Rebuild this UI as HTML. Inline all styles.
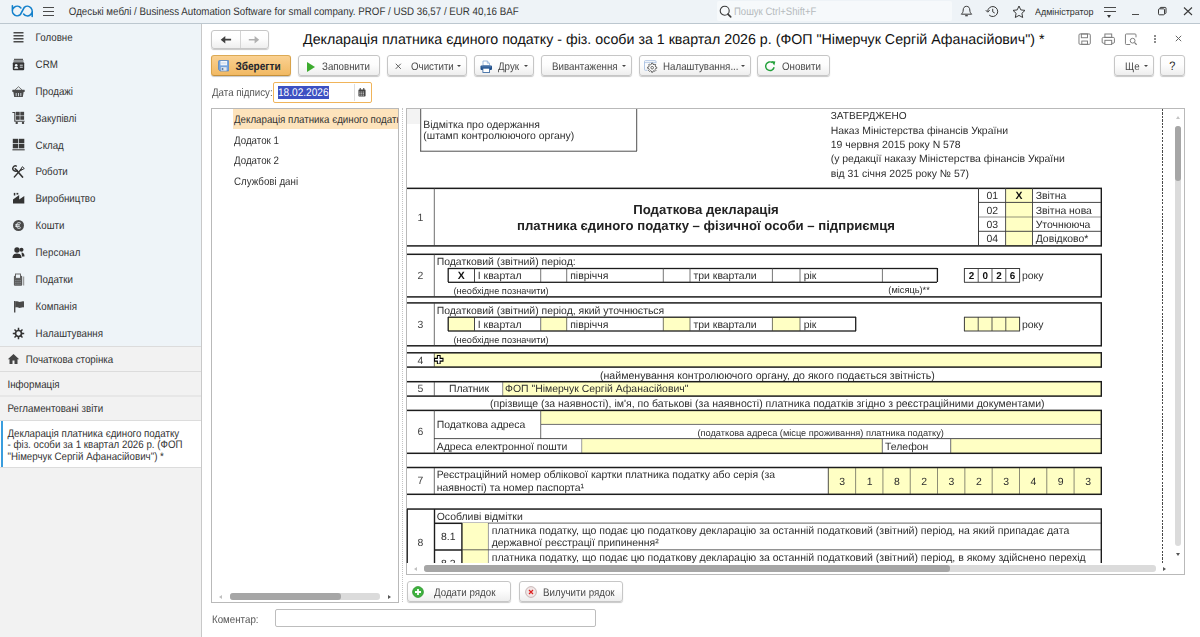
<!DOCTYPE html><html lang="uk"><head><meta charset="utf-8"><title>Декларація платника єдиного податку</title><style>
*{box-sizing:border-box;margin:0;padding:0}
html,body{width:1200px;height:637px;overflow:hidden;background:#fff}
body{font-family:"Liberation Sans",sans-serif;font-size:9.75px;color:#333;position:relative;text-rendering:geometricPrecision}
.a{position:absolute}
.t{position:absolute;white-space:nowrap}
.btn{position:absolute;border:1px solid #c6c6c6;border-radius:3px;background:linear-gradient(#fff 0%,#fdfdfd 45%,#eeeeee 100%);box-shadow:0 1px 1px rgba(0,0,0,.22)}
</style></head><body><div class="a" style="left:0px;top:0px;width:1200px;height:23px;background:#eef3f7;"></div><div class="a" style="left:0px;top:23px;width:1200px;height:1px;background:#bcc7cf"></div><svg class="a" style="left:6px;top:2px" width="30" height="20" viewBox="0 0 30 20"><path d="M14.900 5.900A4.800 4.800 0 1 0 14.300 12.700L18.300 5.300A4.800 4.800 0 1 1 17.600 12.100M6.400 3.700V9M26.200 9v5.500" fill="none" stroke="#1380cb" stroke-width="1.600" stroke-linecap="round"/></svg><div class="a" style="left:43px;top:7px;width:11px;height:1px;background:#4a4a4a;"></div><div class="a" style="left:43px;top:11px;width:11px;height:1px;background:#4a4a4a;"></div><div class="a" style="left:43px;top:15px;width:11px;height:1px;background:#4a4a4a;"></div><div class="t" style="left:68.8px;top:7px;font-size:9.75px;line-height:12px;color:#333;transform:scaleY(1.12);">Одеські меблі / Business Automation Software for small company. PROF / USD 36,57 / EUR 40,16 BAF</div><div class="a" style="left:717px;top:1px;width:235px;height:20px;background:#f6f9fb;border-radius:2px"></div><svg class="a" style="left:719px;top:5px" width="13" height="13" viewBox="0 0 13 13"><circle cx="5.700" cy="5.700" r="4.500" fill="none" stroke="#3a3a3a" stroke-width="1.100"/><path d="M8.900 9.100l2.800 2.800" stroke="#3a3a3a" stroke-width="1.600" stroke-linecap="round"/></svg><div class="t" style="left:734px;top:7px;font-size:9.55px;line-height:12px;color:#b5babd;transform:scaleY(1.14);">Пошук Ctrl+Shift+F</div><svg class="a" style="left:960px;top:5px" width="13" height="13" viewBox="0 0 13 13"><path d="M6.500 1.300c-2.100 0-3.300 1.600-3.300 3.700 0 2.300-1 3.300-1.900 4.200h10.400c-.9-.9-1.900-1.900-1.900-4.200 0-2.100-1.200-3.700-3.300-3.700z" fill="none" stroke="#3a3a3a" stroke-width="1"/><path d="M5.200 10.700h2.600" stroke="#3a3a3a" stroke-width="1.200"/></svg><svg class="a" style="left:985px;top:5px" width="14" height="13" viewBox="0 0 14 13"><path d="M2.700 6.500a5 5 0 1 1 1.500 3.600" fill="none" stroke="#3a3a3a" stroke-width="1"/><path d="M.8 5.200l1.900 2 2-2" fill="none" stroke="#3a3a3a" stroke-width="1"/><path d="M7.700 3.800v3l2 1.200" fill="none" stroke="#3a3a3a" stroke-width="1"/></svg><svg class="a" style="left:1012px;top:5px" width="14" height="13" viewBox="0 0 14 13"><path d="M7 1l1.800 3.900 4.200.5-3.100 2.900.8 4.200L7 10.400l-3.700 2.100.8-4.200L1 5.400l4.200-.5z" fill="none" stroke="#3a3a3a" stroke-width="1" stroke-linejoin="round"/></svg><div class="t" style="left:1035px;top:7px;font-size:8.95px;line-height:11px;color:#333;transform:scaleY(1.05);">Адміністратор</div><div class="a" style="left:1104px;top:7px;width:11.5px;height:1px;background:#4a4a4a;"></div><div class="a" style="left:1104px;top:11px;width:11.5px;height:1px;background:#4a4a4a;"></div><div class="a" style="left:1107px;top:15px;width:0;height:0;border-left:2.500px solid transparent;border-right:2.500px solid transparent;border-top:3px solid #333"></div><div class="a" style="left:1132px;top:14px;width:7px;height:1px;background:#4a4a4a;"></div><svg class="a" style="left:1157px;top:6px" width="10" height="10" viewBox="0 0 10 10"><rect x="1.500" y="2.800" width="6" height="6" rx="1" fill="none" stroke="#3a3a3a" stroke-width="1"/><path d="M3 2.800V2.200a.8.800 0 0 1 .8-.8h4.400a.8.800 0 0 1 .8.800v4.500a.8.800 0 0 1-.8.800H7.600" fill="none" stroke="#3a3a3a" stroke-width="1"/></svg><svg class="a" style="left:1183px;top:6px" width="10" height="10" viewBox="0 0 10 10"><path d="M1 1.500l8 7.500M9 1.500l-8 7.500" stroke="#3a3a3a" stroke-width="1.100" fill="none"/></svg><div class="a" style="left:0px;top:24px;width:201px;height:322px;background:#eef4f8;"></div><div class="a" style="left:0px;top:346px;width:201px;height:291px;background:#f2f2f2;"></div><svg class="a" style="left:12px;top:30.7px" width="13" height="13" viewBox="0 0 13 13"><path d="M1.500 1.700h10M1.500 4.700h10M1.500 7.700h10M1.500 10.700h10" stroke="#4a4a4a" stroke-width="1.500"/></svg><div class="t" style="left:35.6px;top:33px;font-size:9.75px;line-height:12px;color:#333;transform:scaleY(1.12);">Головне</div><svg class="a" style="left:12px;top:57.6px" width="13" height="13" viewBox="0 0 13 13"><path d="M2 1.300h9M1.500 3h10" stroke="#333" stroke-width="1"/><rect x=".8" y="4.200" width="11.400" height="8" rx="1" fill="#333"/><circle cx="4.200" cy="7.200" r="1.300" fill="#eef4f8"/><path d="M2.200 10.700c0-1.500 1-2 2-2s2 .5 2 2z" fill="#eef4f8"/><path d="M7.800 7.200h3M7.800 9.200h3" stroke="#eef4f8" stroke-width=".9"/></svg><div class="t" style="left:35.6px;top:60px;font-size:9.75px;line-height:12px;color:#333;transform:scaleY(1.12);">CRM</div><svg class="a" style="left:12px;top:84.5px" width="13" height="13" viewBox="0 0 13 13"><path d="M3 4.900l3.500-3.200L10 4.900" fill="none" stroke="#6a6a6a" stroke-width=".9"/><rect x=".3" y="4.700" width="12.400" height="2.200" rx=".4" fill="#4a4a4a"/><path d="M1.300 6.800h10.400l-.9 5.300H2.200z" fill="#4a4a4a"/><path d="M4.200 8v3.200M6.500 8v3.200M8.800 8v3.200" stroke="#c9d0d5" stroke-width="1"/></svg><div class="t" style="left:35.6px;top:87px;font-size:9.75px;line-height:12px;color:#333;transform:scaleY(1.12);">Продажі</div><svg class="a" style="left:12px;top:111.4px" width="13" height="13" viewBox="0 0 13 13"><path d="M.4 1.500h2.400v8.800h9.800" fill="none" stroke="#444" stroke-width="1.100"/><rect x="3.900" y=".8" width="3.800" height="3.700" fill="#444"/><rect x="8.300" y=".8" width="3.800" height="3.700" fill="#444"/><rect x="3.900" y="5.100" width="3.800" height="3.700" fill="#444"/><rect x="8.300" y="5.100" width="3.800" height="3.700" fill="#444"/><circle cx="4.700" cy="11.900" r="1.200" fill="#444"/><circle cx="11" cy="11.900" r="1.200" fill="#444"/></svg><div class="t" style="left:35.6px;top:114px;font-size:9.75px;line-height:12px;color:#333;transform:scaleY(1.12);">Закупівлі</div><svg class="a" style="left:12px;top:138.3px" width="13" height="13" viewBox="0 0 13 13"><rect x=".8" y=".8" width="5.400" height="4.400" fill="#3a3a3a"/><rect x="6.900" y=".8" width="5.400" height="4.400" fill="#3a3a3a"/><rect x=".8" y="5.900" width="5.400" height="4.400" fill="#3a3a3a"/><rect x="6.900" y="5.900" width="5.400" height="4.400" fill="#3a3a3a"/><path d="M.4 11.800h12.300" stroke="#3a3a3a" stroke-width="1.100"/></svg><div class="t" style="left:35.6px;top:141px;font-size:9.75px;line-height:12px;color:#333;transform:scaleY(1.12);">Склад</div><svg class="a" style="left:12px;top:165.2px" width="13" height="13" viewBox="0 0 13 13"><path d="M3.200 3.800l7.300 8.200" fill="none" stroke="#333" stroke-width="1.700" stroke-linecap="round"/><path d="M4.800 1.300A2.600 2.600 0 1 0 5.600 5" fill="none" stroke="#333" stroke-width="1.400"/><path d="M2.300 12l6.900-7.700" fill="none" stroke="#333" stroke-width="1.300" stroke-linecap="round"/><path d="M8.700 4.700l1.600-3 2 1.800-3 1.700z" fill="none" stroke="#333" stroke-width="1"/></svg><div class="t" style="left:35.6px;top:167px;font-size:9.75px;line-height:12px;color:#333;transform:scaleY(1.12);">Роботи</div><svg class="a" style="left:12px;top:192.1px" width="13" height="13" viewBox="0 0 13 13"><path d="M1 11.400V7.400l6.200-4.300v4.300l5.100-3.400v7.400z" fill="#333"/><rect x="1.800" y=".9" width="1.500" height="2.600" fill="#333"/><rect x="4.500" y=".9" width="1.800" height="1.700" fill="#333"/></svg><div class="t" style="left:35.6px;top:194px;font-size:9.75px;line-height:12px;color:#333;transform:scaleY(1.12);">Виробництво</div><svg class="a" style="left:12px;top:219px" width="13" height="13" viewBox="0 0 13 13"><circle cx="6.500" cy="6.500" r="5.500" fill="#4a4a4a"/><path d="M8.800 4.300C6.300 2.800 4.300 4.300 4.300 6.500s2 3.700 4.500 2.200M3.300 5.800h4.500M3.300 7.300h4.500" fill="none" stroke="#eef4f8" stroke-width="1"/></svg><div class="t" style="left:35.6px;top:221px;font-size:9.75px;line-height:12px;color:#333;transform:scaleY(1.12);">Кошти</div><svg class="a" style="left:12px;top:245.9px" width="13" height="13" viewBox="0 0 13 13"><circle cx="5" cy="4" r="2.700" fill="#333"/><path d="M.5 12c0-3 1.500-4.500 4.500-4.500S9.500 9 9.500 12z" fill="#333"/><circle cx="9.500" cy="3.800" r="2" fill="#333"/><path d="M9.500 6.500c2 0 3 1.500 3 4H10" fill="#333"/></svg><div class="t" style="left:35.6px;top:248px;font-size:9.75px;line-height:12px;color:#333;transform:scaleY(1.12);">Персонал</div><svg class="a" style="left:12px;top:272.8px" width="13" height="13" viewBox="0 0 13 13"><rect x="1.900" y="2.700" width="8.300" height="10" rx="1" fill="#5a5a5a"/><rect x="3.500" y="1" width="5" height="4.300" fill="#eef4f8" stroke="#5a5a5a" stroke-width=".9"/><path d="M3.200 7.600h5.600M3.200 9.400h5.600M3.200 11.200h5.600" stroke="#8a8f93" stroke-width=".9" stroke-dasharray="1.400 .7"/><path d="M11.700 3.500v9" stroke="#8a8a8a" stroke-width="1"/></svg><div class="t" style="left:35.6px;top:275px;font-size:9.75px;line-height:12px;color:#333;transform:scaleY(1.12);">Податки</div><svg class="a" style="left:12px;top:299.7px" width="13" height="13" viewBox="0 0 13 13"><path d="M2.700 1v11.500" stroke="#4a4a4a" stroke-width="1.400"/><path d="M3.200 1.500c2-1 3.500 1 5.500.3 1.300-.5 2.300-.8 3.300-.3v6c-1-.5-2-.2-3.300.3-2 .7-3.500-1.300-5.500-.3z" fill="#4a4a4a"/></svg><div class="t" style="left:35.6px;top:302px;font-size:9.75px;line-height:12px;color:#333;transform:scaleY(1.12);">Компанія</div><svg class="a" style="left:12px;top:326.6px" width="13" height="13" viewBox="0 0 13 13"><circle cx="6.500" cy="6.500" r="3" fill="none" stroke="#333" stroke-width="1.700"/><path d="M6.500.800V3M6.500 10v2.200M.8 6.500H3M10 6.500h2.200M2.500 2.500L4 4M9 9l1.500 1.500M2.500 10.500L4 9M9 4l1.500-1.500" stroke="#333" stroke-width="1.500"/></svg><div class="t" style="left:35.6px;top:329px;font-size:9.75px;line-height:12px;color:#333;transform:scaleY(1.12);">Налаштування</div><div class="a" style="left:0px;top:420px;width:201px;height:47px;background:#fff;"></div><div class="a" style="left:0px;top:346px;width:201px;height:1px;background:#dcdcdc"></div><div class="a" style="left:0px;top:371px;width:201px;height:1px;background:#dcdcdc"></div><div class="a" style="left:0px;top:395px;width:201px;height:1px;background:rgba(220,220,220,0.50)"></div><div class="a" style="left:0px;top:396px;width:201px;height:1px;background:rgba(220,220,220,0.50)"></div><div class="a" style="left:0px;top:420px;width:201px;height:1px;background:#dcdcdc"></div><div class="a" style="left:0px;top:467px;width:201px;height:1px;background:#dcdcdc"></div><div class="a" style="left:1px;top:421px;width:2px;height:45.5px;background:#3a9ddd;"></div><svg class="a" style="left:7px;top:353px" width="13" height="12" viewBox="0 0 13 12"><path d="M6.500 1L.8 6.300h1.700V11h3V7.500h2V11h3V6.300h1.700z" fill="#454545"/></svg><div class="t" style="left:25.7px;top:355px;font-size:9.75px;line-height:12px;color:#333;transform:scaleY(1.12);">Початкова сторінка</div><div class="t" style="left:7.5px;top:380px;font-size:9.75px;line-height:12px;color:#333;transform:scaleY(1.12);">Інформація</div><div class="t" style="left:7.5px;top:404px;font-size:9.75px;line-height:12px;color:#333;transform:scaleY(1.12);">Регламентовані звіти</div><div class="t" style="left:7.5px;top:429px;font-size:9.75px;line-height:12px;color:#333;transform:scaleY(1.12);">Декларація платника єдиного податку</div><div class="t" style="left:7.5px;top:440px;font-size:9.75px;line-height:12px;color:#333;transform:scaleY(1.12);">- фіз. особи за 1 квартал 2026 р. (ФОП</div><div class="t" style="left:7.5px;top:452px;font-size:9.75px;line-height:12px;color:#333;transform:scaleY(1.12);">"Німерчук Сергій Афанасійович") *</div><div class="a" style="left:201px;top:24px;width:1px;height:613px;background:#c8c8c8"></div><div class="btn" style="left:211px;top:30px;width:57.500px;height:18.500px"></div><div class="a" style="left:240px;top:31px;width:1px;height:16.5px;background:#d4d4d4;"></div><svg class="a" style="left:220px;top:35px" width="12" height="10" viewBox="0 0 12 10"><path d="M.7 4.700L5.300 1v2.800h5.800v1.800H5.300v2.800z" fill="#414141"/></svg><svg class="a" style="left:248px;top:35px" width="12" height="10" viewBox="0 0 12 10"><path d="M11.200 4.700L6.600 1v2.900H.8v1.600h5.800v2.900z" fill="#b0b0b0"/></svg><div class="t" style="left:303px;top:31px;font-size:14.23px;line-height:18px;color:#111;">Декларація платника єдиного податку - фіз. особи за 1 квартал 2026 р. (ФОП "Німерчук Сергій Афанасійович") *</div><svg class="a" style="left:1078.300px;top:32.800px" width="13.300" height="12.300" viewBox="0 0 14 13"><rect x="1" y="1" width="12" height="11" rx="1.200" fill="none" stroke="#7a7a7a" stroke-width="1"/><rect x="3.500" y="1" width="6.500" height="4" fill="none" stroke="#7a7a7a" stroke-width="1"/><rect x="4" y="8.500" width="6" height="3.500" fill="none" stroke="#7a7a7a" stroke-width="1"/></svg><svg class="a" style="left:1101.200px;top:32.600px" width="14.600" height="12.700" viewBox="0 0 15 13"><rect x="4" y="1" width="7" height="3.500" fill="none" stroke="#7a7a7a" stroke-width="1"/><rect x="1.200" y="4.500" width="12.600" height="6" rx="1.200" fill="none" stroke="#7a7a7a" stroke-width="1"/><rect x="4" y="7.500" width="7" height="4.500" fill="#fff" stroke="#7a7a7a" stroke-width="1"/></svg><svg class="a" style="left:1124.300px;top:32.500px" width="14.400" height="12.500" viewBox="0 0 15 13"><path d="M12.500 4.500V2a1 1 0 0 0-1-1h-9a1 1 0 0 0-1 1v9a1 1 0 0 0 1 1h4" fill="none" stroke="#7a7a7a" stroke-width="1"/><circle cx="9" cy="8" r="2.500" fill="none" stroke="#7a7a7a" stroke-width="1"/><path d="M11 10l2.200 2.200" stroke="#7a7a7a" stroke-width="1.300"/></svg><div class="a" style="left:1154px;top:34.5px;width:2px;height:2px;background:#666;border-radius:1px"></div><div class="a" style="left:1154px;top:37.5px;width:2px;height:2px;background:#666;border-radius:1px"></div><div class="a" style="left:1154px;top:40.5px;width:2px;height:2px;background:#666;border-radius:1px"></div><svg class="a" style="left:1175px;top:35px" width="7" height="7" viewBox="0 0 7 7"><path d="M.8.800l5.400 5.400M6.200.800L.8 6.200" stroke="#666" stroke-width="1"/></svg><div class="btn" style="left:211px;top:55px;width:80px;height:21px;background:linear-gradient(#fad192,#f1b963);border-color:#dcaa55 #d9a34a #c4903a"></div><svg class="a" style="left:217.500px;top:60px" width="11.500" height="11.500" viewBox="0 0 14 14"><path d="M.7 1.700a1 1 0 0 1 1-1h10.600a1 1 0 0 1 1 1v10.600a1 1 0 0 1-1 1H2.500L.7 11.500z" fill="#76a5de" stroke="#5084c4" stroke-width="1"/><rect x="3" y="1.200" width="8" height="5.300" fill="#f4f7fc"/><rect x="3.800" y="2.500" width="6.400" height="2.600" fill="#dbe4ef"/><rect x="3.500" y="8.800" width="7" height="4.200" fill="#e4e9f0"/><rect x="4.500" y="9.700" width="2" height="2.600" fill="#5f7fa6"/></svg><div class="t" style="left:235.4px;top:61px;font-size:10.1px;line-height:13px;color:#22252e;font-weight:bold;transform:scaleY(1.14);">Зберегти</div><div class="btn" style="left:298px;top:55px;width:81.5px;height:21px;"></div><div class="a" style="left:307px;top:61.500px;width:0;height:0;border-top:5px solid transparent;border-bottom:5px solid transparent;border-left:8.500px solid #3cab2e"></div><div class="t" style="left:322px;top:62px;font-size:9.75px;line-height:12px;color:#484848;transform:scaleY(1.12);will-change:transform;">Заповнити</div><div class="btn" style="left:387px;top:55px;width:79.5px;height:21px;"></div><svg class="a" style="left:395.300px;top:63px" width="6.600" height="6.600" viewBox="0 0 7 7"><path d="M.8.800l5.400 5.400M6.200.800L.8 6.200" stroke="#555" stroke-width="1"/></svg><div class="t" style="left:410.5px;top:62px;font-size:9.75px;line-height:12px;color:#484848;transform:scaleY(1.12);will-change:transform;">Очистити</div><div class="a" style="left:456.5px;top:65px;width:0;height:0;border-left:2px solid transparent;border-right:2px solid transparent;border-top:2.500px solid #444"></div><div class="btn" style="left:474px;top:55px;width:60px;height:21px;"></div><svg class="a" style="left:479.500px;top:59.500px" width="12.500" height="13" viewBox="0 0 12.500 13"><path d="M3 5.700V1h4.300l2.200 2.200v2.500z" fill="#fff" stroke="#86a9d6" stroke-width=".8"/><path d="M7.300 1v2.200h2.200" fill="none" stroke="#86a9d6" stroke-width=".7"/><rect x=".5" y="5.500" width="11.500" height="4.600" rx="1.100" fill="#1f4f8a"/><path d="M1.500 6.900h9.500" stroke="#6a92c6" stroke-width=".8"/><rect x="2.900" y="8.200" width="6.700" height="4.300" fill="#fff" stroke="#2a5c99" stroke-width=".8"/></svg><div class="t" style="left:497.5px;top:62px;font-size:9.75px;line-height:12px;color:#484848;transform:scaleY(1.12);will-change:transform;">Друк</div><div class="a" style="left:524px;top:65px;width:0;height:0;border-left:2px solid transparent;border-right:2px solid transparent;border-top:2.500px solid #444"></div><div class="btn" style="left:540.5px;top:55px;width:91.5px;height:21px;"></div><div class="t" style="left:551.5px;top:62px;font-size:9.75px;line-height:12px;color:#484848;transform:scaleY(1.12);will-change:transform;">Вивантаження</div><div class="a" style="left:622px;top:65px;width:0;height:0;border-left:2px solid transparent;border-right:2px solid transparent;border-top:2.500px solid #444"></div><div class="btn" style="left:639px;top:55px;width:112px;height:21px;"></div><svg class="a" style="left:644px;top:59.700px" width="14" height="13" viewBox="0 0 14 13"><path d="M3.500 10.300H1.300a.8.800 0 0 1-.8-.8V1.500a.8.800 0 0 1 .8-.8h9.900a.8.800 0 0 1 .8.800v1.700" fill="none" stroke="#a9c1e2" stroke-width=".9"/><path d="M.5 2.600h11.500" stroke="#a9c1e2" stroke-width=".8"/><path d="M11.62 6.94L12.76 7.09L12.76 8.31L11.62 8.46L11.16 9.58L11.86 10.49L10.99 11.36L10.08 10.66L8.96 11.12L8.81 12.26L7.59 12.26L7.44 11.12L6.32 10.66L5.41 11.36L4.54 10.49L5.24 9.58L4.78 8.46L3.64 8.31L3.64 7.09L4.78 6.94L5.24 5.82L4.54 4.91L5.41 4.04L6.32 4.74L7.44 4.28L7.59 3.14L8.81 3.14L8.96 4.28L10.08 4.74L10.99 4.04L11.86 4.91L11.16 5.82z" fill="#fff" stroke="#555" stroke-width=".9" stroke-linejoin="round"/><circle cx="8.200" cy="7.700" r="1.300" fill="none" stroke="#555" stroke-width=".9"/></svg><div class="t" style="left:662.5px;top:62px;font-size:9.75px;line-height:12px;color:#484848;transform:scaleY(1.12);will-change:transform;">Налаштування...</div><div class="a" style="left:741px;top:65px;width:0;height:0;border-left:2px solid transparent;border-right:2px solid transparent;border-top:2.500px solid #444"></div><div class="btn" style="left:757px;top:55px;width:72.5px;height:21px;"></div><svg class="a" style="left:762.500px;top:59px" width="14" height="14" viewBox="0 0 14 14"><path d="M11.150 8.300A4.300 4.300 0 1 1 9.470 3.680" fill="none" stroke="#22a03a" stroke-width="1.400"/><path d="M8.200 2.100l4.100.3-1 4z" fill="#22a03a"/></svg><div class="t" style="left:781.5px;top:62px;font-size:9.75px;line-height:12px;color:#484848;transform:scaleY(1.12);will-change:transform;">Оновити</div><div class="btn" style="left:1114px;top:55px;width:39.5px;height:21px;"></div><div class="t" style="left:1124.5px;top:62px;font-size:9.75px;line-height:12px;color:#484848;transform:scaleY(1.12);will-change:transform;">Ще</div><div class="a" style="left:1144px;top:65px;width:0;height:0;border-left:2px solid transparent;border-right:2px solid transparent;border-top:2.500px solid #444"></div><div class="btn" style="left:1160px;top:55px;width:24.5px;height:21px;"></div><div class="t" style="left:1172.3px;top:60px;font-size:11px;line-height:14px;color:#222;transform:translateX(-50%) scaleY(1.12);">?</div><div class="t" style="left:211.5px;top:88px;font-size:9.75px;line-height:12px;color:#555;transform:scaleY(1.12);will-change:transform;">Дата підпису:</div><div class="a" style="left:273px;top:82px;width:99px;height:20.500px;border:1px solid #f0b45a;border-radius:2px;background:#fff"></div><div class="a" style="left:277.5px;top:85.5px;width:51px;height:13px;background:#3c50c2;"></div><div class="t" style="left:278px;top:87px;font-size:10.1px;line-height:13px;color:#fff;transform:scaleY(1.1);">18.02.2026</div><div class="a" style="left:353.5px;top:84px;width:1px;height:16.5px;background:#ddd;"></div><svg class="a" style="left:358.300px;top:87.800px" width="8" height="9" viewBox="0 0 9 10"><rect x=".5" y="1.500" width="8" height="8" rx=".8" fill="#444"/><path d="M2.500 0v2.500M6.500 0v2.500" stroke="#444" stroke-width="1.200"/><path d="M1.500 4.500h6M1.500 6.300h6M1.500 8h6" stroke="#fff" stroke-width=".8" stroke-dasharray="1.300 .7"/></svg><div class="a" style="left:211px;top:108px;width:187.500px;height:494.600px;border:1px solid #b9b9b9;background:#fff"></div><div class="a" style="left:232.5px;top:109px;width:165px;height:20px;background:#fde3bc;"></div><div class="a" style="left:0;top:100px;width:397.500px;height:40px;overflow:hidden"><div class="t" style="left:234px;top:15px;font-size:9.75px;line-height:12px;color:#333;transform:scaleY(1.12);">Декларація платника єдиного податку - фіз. особи</div></div><div class="t" style="left:234px;top:136px;font-size:9.75px;line-height:12px;color:#333;transform:scaleY(1.12);">Додаток 1</div><div class="t" style="left:234px;top:156px;font-size:9.75px;line-height:12px;color:#333;transform:scaleY(1.12);">Додаток 2</div><div class="t" style="left:234px;top:177px;font-size:9.75px;line-height:12px;color:#333;transform:scaleY(1.12);">Службові дані</div><div class="a" style="left:229.5px;top:593px;width:150.5px;height:6.5px;background:#dbdbdb;border-radius:3px"></div><div class="a" style="left:229.5px;top:593px;width:111px;height:6.5px;background:#a6a6a6;border-radius:3px"></div><div class="a" style="left:219px;top:594.500px;width:0;height:0;border-top:2px solid transparent;border-bottom:2px solid transparent;border-right:3px solid #c0c0c0"></div><div class="a" style="left:388px;top:594.500px;width:0;height:0;border-top:2px solid transparent;border-bottom:2px solid transparent;border-left:3px solid #555"></div><div class="a" style="left:402px;top:108px;width:0;height:494px;border-left:1px dotted #c4c4c4"></div><div class="a" style="left:406px;top:108px;width:778.500px;height:466.500px;border:1px solid #b9b9b9;background:#fff"></div><div class="a" style="left:0;top:0;width:1174px;height:563px;overflow:hidden"><div class="a" style="left:407px;top:109px;width:13px;height:15px;background:#f3f3f3;"></div><div class="a" style="left:420px;top:109px;width:1px;height:42px;background:rgba(60,60,60,0.72)"></div><div class="a" style="left:421px;top:109px;width:1px;height:42px;background:rgba(60,60,60,0.18)"></div><div class="a" style="left:636px;top:109px;width:1px;height:42px;background:rgba(60,60,60,0.72)"></div><div class="a" style="left:637px;top:109px;width:1px;height:42px;background:rgba(60,60,60,0.18)"></div><div class="a" style="left:420px;top:150px;width:217px;height:1px;background:rgba(60,60,60,0.27)"></div><div class="a" style="left:420px;top:151px;width:217px;height:1px;background:rgba(60,60,60,0.63)"></div><div class="t" style="left:423.3px;top:119px;font-size:10.45px;line-height:13px;color:#2e2e2e;">Відмітка про одержання</div><div class="t" style="left:423.3px;top:130px;font-size:10.45px;line-height:13px;color:#2e2e2e;">(штамп контролюючого органу)</div><div class="t" style="left:830.7px;top:110px;font-size:10.15px;line-height:13px;color:#2e2e2e;">ЗАТВЕРДЖЕНО</div><div class="t" style="left:830.7px;top:125px;font-size:10.45px;line-height:13px;color:#2e2e2e;">Наказ Міністерства фінансів України</div><div class="t" style="left:830.7px;top:139px;font-size:10.45px;line-height:13px;color:#2e2e2e;">19 червня 2015 року N 578</div><div class="t" style="left:830.7px;top:153px;font-size:10.45px;line-height:13px;color:#2e2e2e;">(у редакції наказу Міністерства фінансів України</div><div class="t" style="left:830.7px;top:168px;font-size:10.45px;line-height:13px;color:#2e2e2e;">від 31 січня 2025 року № 57)</div><div class="a" style="left:1005.6px;top:188.35px;width:26.9px;height:57.55px;background:#ffffc4;"></div><div class="a" style="left:407px;top:187px;width:695px;height:1px;background:rgba(28,28,28,0.40)"></div><div class="a" style="left:407px;top:188px;width:695px;height:1px;background:#1c1c1c"></div><div class="a" style="left:407px;top:189px;width:695px;height:1px;background:rgba(28,28,28,0.10)"></div><div class="a" style="left:407px;top:245px;width:695px;height:1px;background:rgba(28,28,28,0.85)"></div><div class="a" style="left:407px;top:246px;width:695px;height:1px;background:rgba(28,28,28,0.65)"></div><div class="a" style="left:1100px;top:188px;width:1px;height:58px;background:rgba(28,28,28,0.40)"></div><div class="a" style="left:1101px;top:188px;width:1px;height:58px;background:#1c1c1c"></div><div class="a" style="left:433px;top:188px;width:1px;height:58px;background:rgba(60,60,60,0.15)"></div><div class="a" style="left:434px;top:188px;width:1px;height:58px;background:rgba(60,60,60,0.60)"></div><div class="t" style="left:420.5px;top:212px;font-size:10.45px;line-height:13px;color:#444;transform:translateX(-50%);">1</div><div class="t" style="left:706px;top:202px;font-size:13.15px;line-height:16px;color:#222;font-weight:bold;transform:translateX(-50%);">Податкова декларація</div><div class="t" style="left:706px;top:218px;font-size:13.15px;line-height:16px;color:#222;font-weight:bold;transform:translateX(-50%);">платника єдиного податку – фізичної особи – підприємця</div><div class="a" style="left:978px;top:188px;width:1px;height:58px;background:#3c3c3c"></div><div class="a" style="left:1005px;top:188px;width:1px;height:58px;background:rgba(60,60,60,0.81)"></div><div class="a" style="left:1006px;top:188px;width:1px;height:58px;background:rgba(60,60,60,0.09)"></div><div class="a" style="left:1032px;top:188px;width:1px;height:58px;background:rgba(60,60,60,0.90)"></div><div class="a" style="left:978px;top:201px;width:123px;height:1px;background:rgba(60,60,60,0.09)"></div><div class="a" style="left:978px;top:202px;width:123px;height:1px;background:rgba(60,60,60,0.86)"></div><div class="a" style="left:978px;top:216px;width:123px;height:1px;background:rgba(60,60,60,0.28)"></div><div class="a" style="left:978px;top:217px;width:123px;height:1px;background:rgba(60,60,60,0.28)"></div><div class="a" style="left:978px;top:230px;width:123px;height:1px;background:rgba(60,60,60,0.19)"></div><div class="a" style="left:978px;top:231px;width:123px;height:1px;background:rgba(60,60,60,0.76)"></div><div class="t" style="left:986.4px;top:190px;font-size:10.45px;line-height:13px;color:#2e2e2e;">01</div><div class="t" style="left:1035.7px;top:190px;font-size:10.45px;line-height:13px;color:#2e2e2e;">Звітна</div><div class="t" style="left:986.4px;top:205px;font-size:10.45px;line-height:13px;color:#2e2e2e;">02</div><div class="t" style="left:1035.7px;top:205px;font-size:10.45px;line-height:13px;color:#2e2e2e;">Звітна нова</div><div class="t" style="left:986.4px;top:219px;font-size:10.45px;line-height:13px;color:#2e2e2e;">03</div><div class="t" style="left:1035.7px;top:219px;font-size:10.45px;line-height:13px;color:#2e2e2e;">Уточнююча</div><div class="t" style="left:986.4px;top:233px;font-size:10.45px;line-height:13px;color:#2e2e2e;">04</div><div class="t" style="left:1035.7px;top:233px;font-size:10.45px;line-height:13px;color:#2e2e2e;">Довідково*</div><div class="t" style="left:1019px;top:190px;font-size:10.45px;line-height:13px;color:#111;font-weight:bold;transform:translateX(-50%);">X</div><div class="a" style="left:407px;top:253px;width:695px;height:1px;background:rgba(28,28,28,0.45)"></div><div class="a" style="left:407px;top:254px;width:695px;height:1px;background:#1c1c1c"></div><div class="a" style="left:407px;top:255px;width:695px;height:1px;background:rgba(28,28,28,0.05)"></div><div class="a" style="left:407px;top:296px;width:695px;height:1px;background:rgba(28,28,28,0.85)"></div><div class="a" style="left:407px;top:297px;width:695px;height:1px;background:rgba(28,28,28,0.65)"></div><div class="a" style="left:1100px;top:254px;width:1px;height:43px;background:rgba(28,28,28,0.40)"></div><div class="a" style="left:1101px;top:254px;width:1px;height:43px;background:#1c1c1c"></div><div class="a" style="left:433px;top:254px;width:1px;height:43px;background:rgba(60,60,60,0.15)"></div><div class="a" style="left:434px;top:254px;width:1px;height:43px;background:rgba(60,60,60,0.60)"></div><div class="t" style="left:420.5px;top:270px;font-size:10.45px;line-height:13px;color:#444;transform:translateX(-50%);">2</div><div class="t" style="left:436.7px;top:256px;font-size:10.45px;line-height:13px;color:#2e2e2e;">Податковий (звітний) період:</div><div class="a" style="left:448px;top:267px;width:489px;height:1px;background:rgba(28,28,28,0.15)"></div><div class="a" style="left:448px;top:268px;width:489px;height:1px;background:#1c1c1c"></div><div class="a" style="left:448px;top:269px;width:489px;height:1px;background:rgba(28,28,28,0.15)"></div><div class="a" style="left:448px;top:281px;width:489px;height:1px;background:rgba(28,28,28,0.35)"></div><div class="a" style="left:448px;top:282px;width:489px;height:1px;background:rgba(28,28,28,0.95)"></div><div class="a" style="left:447px;top:268px;width:1px;height:14px;background:rgba(28,28,28,0.45)"></div><div class="a" style="left:448px;top:268px;width:1px;height:14px;background:rgba(28,28,28,0.85)"></div><div class="a" style="left:936px;top:268px;width:1px;height:14px;background:rgba(28,28,28,0.25)"></div><div class="a" style="left:937px;top:268px;width:1px;height:14px;background:#1c1c1c"></div><div class="a" style="left:938px;top:268px;width:1px;height:14px;background:rgba(28,28,28,0.05)"></div><div class="a" style="left:474px;top:268px;width:1px;height:14px;background:rgba(60,60,60,0.95)"></div><div class="a" style="left:540px;top:268px;width:1px;height:14px;background:rgba(60,60,60,0.56)"></div><div class="a" style="left:541px;top:268px;width:1px;height:14px;background:rgba(60,60,60,0.14)"></div><div class="a" style="left:566px;top:268px;width:1px;height:14px;background:rgba(60,60,60,0.56)"></div><div class="a" style="left:567px;top:268px;width:1px;height:14px;background:rgba(60,60,60,0.14)"></div><div class="a" style="left:662px;top:268px;width:1px;height:14px;background:rgba(60,60,60,0.14)"></div><div class="a" style="left:663px;top:268px;width:1px;height:14px;background:rgba(60,60,60,0.56)"></div><div class="a" style="left:689px;top:268px;width:1px;height:14px;background:rgba(60,60,60,0.35)"></div><div class="a" style="left:690px;top:268px;width:1px;height:14px;background:rgba(60,60,60,0.35)"></div><div class="a" style="left:771px;top:268px;width:1px;height:14px;background:rgba(60,60,60,0.07)"></div><div class="a" style="left:772px;top:268px;width:1px;height:14px;background:rgba(60,60,60,0.63)"></div><div class="a" style="left:799px;top:268px;width:1px;height:14px;background:rgba(60,60,60,0.35)"></div><div class="a" style="left:800px;top:268px;width:1px;height:14px;background:rgba(60,60,60,0.35)"></div><div class="a" style="left:881px;top:268px;width:1px;height:14px;background:rgba(60,60,60,0.07)"></div><div class="a" style="left:882px;top:268px;width:1px;height:14px;background:rgba(60,60,60,0.63)"></div><div class="t" style="left:461.2px;top:270px;font-size:10.45px;line-height:13px;color:#111;font-weight:bold;transform:translateX(-50%);">X</div><div class="t" style="left:477.8px;top:270px;font-size:10.45px;line-height:13px;color:#2e2e2e;">І квартал</div><div class="t" style="left:570.2px;top:270px;font-size:10.45px;line-height:13px;color:#2e2e2e;">півріччя</div><div class="t" style="left:693.5px;top:270px;font-size:10.45px;line-height:13px;color:#2e2e2e;">три квартали</div><div class="t" style="left:803.7px;top:270px;font-size:10.45px;line-height:13px;color:#2e2e2e;">рік</div><div class="t" style="left:453.5px;top:285px;font-size:9.25px;line-height:12px;color:#2e2e2e;">(необхідне позначити)</div><div class="t" style="left:888.3px;top:284px;font-size:9.25px;line-height:12px;color:#2e2e2e;">(місяць)**</div><div class="a" style="left:964px;top:268px;width:56px;height:1px;background:#3c3c3c"></div><div class="a" style="left:964px;top:281px;width:56px;height:1px;background:rgba(60,60,60,0.20)"></div><div class="a" style="left:964px;top:282px;width:56px;height:1px;background:rgba(60,60,60,0.80)"></div><div class="a" style="left:963px;top:268px;width:1px;height:14px;background:rgba(60,60,60,0.10)"></div><div class="a" style="left:964px;top:268px;width:1px;height:14px;background:rgba(60,60,60,0.90)"></div><div class="a" style="left:977px;top:268px;width:1px;height:14px;background:rgba(60,60,60,0.26)"></div><div class="a" style="left:978px;top:268px;width:1px;height:14px;background:rgba(60,60,60,0.59)"></div><div class="a" style="left:991px;top:268px;width:1px;height:14px;background:rgba(60,60,60,0.42)"></div><div class="a" style="left:992px;top:268px;width:1px;height:14px;background:rgba(60,60,60,0.42)"></div><div class="a" style="left:1005px;top:268px;width:1px;height:14px;background:rgba(60,60,60,0.60)"></div><div class="a" style="left:1006px;top:268px;width:1px;height:14px;background:rgba(60,60,60,0.25)"></div><div class="a" style="left:1019px;top:268px;width:1px;height:14px;background:rgba(60,60,60,0.90)"></div><div class="a" style="left:1020px;top:268px;width:1px;height:14px;background:rgba(60,60,60,0.10)"></div><div class="t" style="left:971.6px;top:271px;font-size:9.9px;line-height:12px;color:#111;font-weight:bold;transform:translateX(-50%);">2</div><div class="t" style="left:985.25px;top:271px;font-size:9.9px;line-height:12px;color:#111;font-weight:bold;transform:translateX(-50%);">0</div><div class="t" style="left:998.9px;top:271px;font-size:9.9px;line-height:12px;color:#111;font-weight:bold;transform:translateX(-50%);">2</div><div class="t" style="left:1012.55px;top:271px;font-size:9.9px;line-height:12px;color:#111;font-weight:bold;transform:translateX(-50%);">6</div><div class="t" style="left:1022px;top:270px;font-size:10.45px;line-height:13px;color:#2e2e2e;">року</div><div class="a" style="left:407px;top:302px;width:695px;height:1px;background:rgba(28,28,28,0.85)"></div><div class="a" style="left:407px;top:303px;width:695px;height:1px;background:rgba(28,28,28,0.65)"></div><div class="a" style="left:407px;top:345px;width:695px;height:1px;background:rgba(28,28,28,0.95)"></div><div class="a" style="left:407px;top:346px;width:695px;height:1px;background:rgba(28,28,28,0.55)"></div><div class="a" style="left:1100px;top:303px;width:1px;height:43px;background:rgba(28,28,28,0.40)"></div><div class="a" style="left:1101px;top:303px;width:1px;height:43px;background:#1c1c1c"></div><div class="a" style="left:433px;top:303px;width:1px;height:43px;background:rgba(60,60,60,0.15)"></div><div class="a" style="left:434px;top:303px;width:1px;height:43px;background:rgba(60,60,60,0.60)"></div><div class="t" style="left:420.5px;top:319px;font-size:10.45px;line-height:13px;color:#444;transform:translateX(-50%);">3</div><div class="t" style="left:436.7px;top:305px;font-size:10.45px;line-height:13px;color:#2e2e2e;">Податковий (звітний) період, який уточнюється</div><div class="a" style="left:448.3px;top:317.2px;width:25.7px;height:13.8px;background:#ffffc4;"></div><div class="a" style="left:540.7px;top:317.2px;width:26px;height:13.8px;background:#ffffc4;"></div><div class="a" style="left:663.3px;top:317.2px;width:26.7px;height:13.8px;background:#ffffc4;"></div><div class="a" style="left:772.3px;top:317.2px;width:27.7px;height:13.8px;background:#ffffc4;"></div><div class="a" style="left:448px;top:316px;width:408px;height:1px;background:rgba(28,28,28,0.45)"></div><div class="a" style="left:448px;top:317px;width:408px;height:1px;background:rgba(28,28,28,0.85)"></div><div class="a" style="left:448px;top:330px;width:408px;height:1px;background:rgba(28,28,28,0.65)"></div><div class="a" style="left:448px;top:331px;width:408px;height:1px;background:rgba(28,28,28,0.65)"></div><div class="a" style="left:447px;top:317px;width:1px;height:14px;background:rgba(28,28,28,0.45)"></div><div class="a" style="left:448px;top:317px;width:1px;height:14px;background:rgba(28,28,28,0.85)"></div><div class="a" style="left:855px;top:317px;width:1px;height:14px;background:rgba(28,28,28,0.95)"></div><div class="a" style="left:856px;top:317px;width:1px;height:14px;background:rgba(28,28,28,0.35)"></div><div class="a" style="left:474px;top:317px;width:1px;height:14px;background:rgba(60,60,60,0.95)"></div><div class="a" style="left:540px;top:317px;width:1px;height:14px;background:rgba(60,60,60,0.56)"></div><div class="a" style="left:541px;top:317px;width:1px;height:14px;background:rgba(60,60,60,0.14)"></div><div class="a" style="left:566px;top:317px;width:1px;height:14px;background:rgba(60,60,60,0.56)"></div><div class="a" style="left:567px;top:317px;width:1px;height:14px;background:rgba(60,60,60,0.14)"></div><div class="a" style="left:662px;top:317px;width:1px;height:14px;background:rgba(60,60,60,0.14)"></div><div class="a" style="left:663px;top:317px;width:1px;height:14px;background:rgba(60,60,60,0.56)"></div><div class="a" style="left:689px;top:317px;width:1px;height:14px;background:rgba(60,60,60,0.35)"></div><div class="a" style="left:690px;top:317px;width:1px;height:14px;background:rgba(60,60,60,0.35)"></div><div class="a" style="left:771px;top:317px;width:1px;height:14px;background:rgba(60,60,60,0.07)"></div><div class="a" style="left:772px;top:317px;width:1px;height:14px;background:rgba(60,60,60,0.63)"></div><div class="a" style="left:799px;top:317px;width:1px;height:14px;background:rgba(60,60,60,0.35)"></div><div class="a" style="left:800px;top:317px;width:1px;height:14px;background:rgba(60,60,60,0.35)"></div><div class="t" style="left:477.8px;top:319px;font-size:10.45px;line-height:13px;color:#2e2e2e;">І квартал</div><div class="t" style="left:570.2px;top:319px;font-size:10.45px;line-height:13px;color:#2e2e2e;">півріччя</div><div class="t" style="left:693.5px;top:319px;font-size:10.45px;line-height:13px;color:#2e2e2e;">три квартали</div><div class="t" style="left:803.7px;top:319px;font-size:10.45px;line-height:13px;color:#2e2e2e;">рік</div><div class="t" style="left:453.5px;top:334px;font-size:9.25px;line-height:12px;color:#2e2e2e;">(необхідне позначити)</div><div class="a" style="left:964.4px;top:317.2px;width:55.2px;height:13.8px;background:#ffffc4;"></div><div class="a" style="left:964px;top:316px;width:56px;height:1px;background:rgba(60,60,60,0.30)"></div><div class="a" style="left:964px;top:317px;width:56px;height:1px;background:rgba(60,60,60,0.70)"></div><div class="a" style="left:964px;top:330px;width:56px;height:1px;background:rgba(60,60,60,0.50)"></div><div class="a" style="left:964px;top:331px;width:56px;height:1px;background:rgba(60,60,60,0.50)"></div><div class="a" style="left:963px;top:317px;width:1px;height:14px;background:rgba(60,60,60,0.10)"></div><div class="a" style="left:964px;top:317px;width:1px;height:14px;background:rgba(60,60,60,0.90)"></div><div class="a" style="left:977px;top:317px;width:1px;height:14px;background:rgba(60,60,60,0.26)"></div><div class="a" style="left:978px;top:317px;width:1px;height:14px;background:rgba(60,60,60,0.59)"></div><div class="a" style="left:991px;top:317px;width:1px;height:14px;background:rgba(60,60,60,0.42)"></div><div class="a" style="left:992px;top:317px;width:1px;height:14px;background:rgba(60,60,60,0.42)"></div><div class="a" style="left:1005px;top:317px;width:1px;height:14px;background:rgba(60,60,60,0.60)"></div><div class="a" style="left:1006px;top:317px;width:1px;height:14px;background:rgba(60,60,60,0.25)"></div><div class="a" style="left:1019px;top:317px;width:1px;height:14px;background:rgba(60,60,60,0.90)"></div><div class="a" style="left:1020px;top:317px;width:1px;height:14px;background:rgba(60,60,60,0.10)"></div><div class="t" style="left:1022px;top:319px;font-size:10.45px;line-height:13px;color:#2e2e2e;">року</div><div class="a" style="left:434.3px;top:352.8px;width:667.1px;height:14.3px;background:#ffffc4;"></div><div class="a" style="left:407px;top:352px;width:695px;height:1px;background:rgba(28,28,28,0.95)"></div><div class="a" style="left:407px;top:353px;width:695px;height:1px;background:rgba(28,28,28,0.55)"></div><div class="a" style="left:407px;top:366px;width:695px;height:1px;background:rgba(28,28,28,0.65)"></div><div class="a" style="left:407px;top:367px;width:695px;height:1px;background:rgba(28,28,28,0.85)"></div><div class="a" style="left:1100px;top:353px;width:1px;height:14px;background:rgba(28,28,28,0.40)"></div><div class="a" style="left:1101px;top:353px;width:1px;height:14px;background:#1c1c1c"></div><div class="a" style="left:433px;top:353px;width:1px;height:14px;background:rgba(60,60,60,0.15)"></div><div class="a" style="left:434px;top:353px;width:1px;height:14px;background:rgba(60,60,60,0.60)"></div><div class="t" style="left:420.5px;top:355px;font-size:10.45px;line-height:13px;color:#444;transform:translateX(-50%);">4</div><svg class="a" style="left:434px;top:354.500px" width="9.500" height="9.500" viewBox="0 0 9 9"><path d="M3.200.500h2.600v2.700h2.700v2.600H5.800v2.700H3.200V5.800H.5V3.200h2.700z" fill="#fff" stroke="#000" stroke-width="1"/></svg><div class="t" style="left:600px;top:370px;font-size:10.58px;line-height:13px;color:#2e2e2e;">(найменування контролюючого органу, до якого подається звітність)</div><div class="a" style="left:502.7px;top:381.7px;width:598.7px;height:14.4px;background:#ffffc4;"></div><div class="a" style="left:407px;top:380px;width:695px;height:1px;background:rgba(28,28,28,0.05)"></div><div class="a" style="left:407px;top:381px;width:695px;height:1px;background:#1c1c1c"></div><div class="a" style="left:407px;top:382px;width:695px;height:1px;background:rgba(28,28,28,0.45)"></div><div class="a" style="left:407px;top:395px;width:695px;height:1px;background:rgba(28,28,28,0.65)"></div><div class="a" style="left:407px;top:396px;width:695px;height:1px;background:rgba(28,28,28,0.85)"></div><div class="a" style="left:1100px;top:382px;width:1px;height:14px;background:rgba(28,28,28,0.40)"></div><div class="a" style="left:1101px;top:382px;width:1px;height:14px;background:#1c1c1c"></div><div class="a" style="left:433px;top:382px;width:1px;height:14px;background:rgba(60,60,60,0.15)"></div><div class="a" style="left:434px;top:382px;width:1px;height:14px;background:rgba(60,60,60,0.60)"></div><div class="a" style="left:502px;top:382px;width:1px;height:14px;background:rgba(60,60,60,0.48)"></div><div class="a" style="left:503px;top:382px;width:1px;height:14px;background:rgba(60,60,60,0.12)"></div><div class="t" style="left:420.3px;top:383px;font-size:10.45px;line-height:13px;color:#444;transform:translateX(-50%);">5</div><div class="t" style="left:448.9px;top:383px;font-size:10.45px;line-height:13px;color:#2e2e2e;">Платник</div><div class="t" style="left:505px;top:383px;font-size:10.45px;line-height:13px;color:#2e2e2e;">ФОП "Німерчук Сергій Афанасійович"</div><div class="t" style="left:490px;top:398px;font-size:10.52px;line-height:13px;color:#2e2e2e;">(прізвище (за наявності), ім'я, по батькові (за наявності) платника податків згідно з реєстраційними документами)</div><div class="a" style="left:540.7px;top:410.4px;width:560.7px;height:14px;background:#ffffc4;"></div><div class="a" style="left:581.7px;top:438.6px;width:300.6px;height:14.7px;background:#ffffc4;"></div><div class="a" style="left:950.7px;top:438.6px;width:150.7px;height:14.7px;background:#ffffc4;"></div><div class="a" style="left:407px;top:409px;width:695px;height:1px;background:rgba(28,28,28,0.35)"></div><div class="a" style="left:407px;top:410px;width:695px;height:1px;background:#1c1c1c"></div><div class="a" style="left:407px;top:411px;width:695px;height:1px;background:rgba(28,28,28,0.15)"></div><div class="a" style="left:407px;top:452px;width:695px;height:1px;background:rgba(28,28,28,0.45)"></div><div class="a" style="left:407px;top:453px;width:695px;height:1px;background:#1c1c1c"></div><div class="a" style="left:407px;top:454px;width:695px;height:1px;background:rgba(28,28,28,0.05)"></div><div class="a" style="left:1100px;top:410px;width:1px;height:43px;background:rgba(28,28,28,0.40)"></div><div class="a" style="left:1101px;top:410px;width:1px;height:43px;background:#1c1c1c"></div><div class="a" style="left:433px;top:410px;width:1px;height:43px;background:rgba(60,60,60,0.15)"></div><div class="a" style="left:434px;top:410px;width:1px;height:43px;background:rgba(60,60,60,0.60)"></div><div class="a" style="left:540px;top:410px;width:1px;height:29px;background:rgba(60,60,60,0.60)"></div><div class="a" style="left:541px;top:410px;width:1px;height:29px;background:rgba(60,60,60,0.15)"></div><div class="a" style="left:541px;top:423px;width:560px;height:1px;background:rgba(60,60,60,0.08)"></div><div class="a" style="left:541px;top:424px;width:560px;height:1px;background:rgba(60,60,60,0.67)"></div><div class="a" style="left:434px;top:438px;width:667px;height:1px;background:rgba(60,60,60,0.81)"></div><div class="a" style="left:434px;top:439px;width:667px;height:1px;background:rgba(60,60,60,0.09)"></div><div class="a" style="left:581px;top:439px;width:1px;height:14px;background:rgba(60,60,60,0.40)"></div><div class="a" style="left:582px;top:439px;width:1px;height:14px;background:rgba(60,60,60,0.10)"></div><div class="a" style="left:881px;top:439px;width:1px;height:14px;background:rgba(60,60,60,0.15)"></div><div class="a" style="left:882px;top:439px;width:1px;height:14px;background:rgba(60,60,60,0.60)"></div><div class="a" style="left:950px;top:439px;width:1px;height:14px;background:rgba(60,60,60,0.60)"></div><div class="a" style="left:951px;top:439px;width:1px;height:14px;background:rgba(60,60,60,0.15)"></div><div class="t" style="left:420.5px;top:426px;font-size:10.45px;line-height:13px;color:#444;transform:translateX(-50%);">6</div><div class="t" style="left:436.7px;top:419px;font-size:10.45px;line-height:13px;color:#2e2e2e;">Податкова адреса</div><div class="t" style="left:697.5px;top:427px;font-size:9.22px;line-height:12px;color:#2e2e2e;">(податкова адреса (місце проживання) платника податку)</div><div class="t" style="left:436.7px;top:441px;font-size:10.45px;line-height:13px;color:#2e2e2e;">Адреса електронної пошти</div><div class="t" style="left:885px;top:441px;font-size:10.45px;line-height:13px;color:#2e2e2e;">Телефон</div><div class="a" style="left:828.3px;top:467.5px;width:273.1px;height:26.8px;background:#ffffc4;"></div><div class="a" style="left:407px;top:466px;width:695px;height:1px;background:rgba(28,28,28,0.25)"></div><div class="a" style="left:407px;top:467px;width:695px;height:1px;background:#1c1c1c"></div><div class="a" style="left:407px;top:468px;width:695px;height:1px;background:rgba(28,28,28,0.25)"></div><div class="a" style="left:407px;top:493px;width:695px;height:1px;background:rgba(28,28,28,0.45)"></div><div class="a" style="left:407px;top:494px;width:695px;height:1px;background:#1c1c1c"></div><div class="a" style="left:407px;top:495px;width:695px;height:1px;background:rgba(28,28,28,0.05)"></div><div class="a" style="left:1100px;top:468px;width:1px;height:26px;background:rgba(28,28,28,0.40)"></div><div class="a" style="left:1101px;top:468px;width:1px;height:26px;background:#1c1c1c"></div><div class="a" style="left:433px;top:468px;width:1px;height:26px;background:rgba(60,60,60,0.15)"></div><div class="a" style="left:434px;top:468px;width:1px;height:26px;background:rgba(60,60,60,0.60)"></div><div class="t" style="left:420.5px;top:475px;font-size:10.45px;line-height:13px;color:#444;transform:translateX(-50%);">7</div><div class="t" style="left:436.7px;top:469px;font-size:10.45px;line-height:13px;color:#2e2e2e;">Реєстраційний номер облікової картки платника податку або серія (за</div><div class="t" style="left:436.7px;top:482px;font-size:10.45px;line-height:13px;color:#2e2e2e;">наявності) та номер паспорта¹</div><div class="a" style="left:827px;top:468px;width:1px;height:26px;background:rgba(60,60,60,0.18)"></div><div class="a" style="left:828px;top:468px;width:1px;height:26px;background:rgba(60,60,60,0.72)"></div><div class="t" style="left:842.25px;top:476px;font-size:10.45px;line-height:13px;color:#2e2e2e;transform:translateX(-50%);">3</div><div class="a" style="left:855px;top:468px;width:1px;height:26px;background:rgba(60,60,60,0.53)"></div><div class="a" style="left:856px;top:468px;width:1px;height:26px;background:rgba(60,60,60,0.07)"></div><div class="t" style="left:869.56px;top:476px;font-size:10.45px;line-height:13px;color:#2e2e2e;transform:translateX(-50%);">1</div><div class="a" style="left:882px;top:468px;width:1px;height:26px;background:rgba(60,60,60,0.35)"></div><div class="a" style="left:883px;top:468px;width:1px;height:26px;background:rgba(60,60,60,0.25)"></div><div class="t" style="left:896.88px;top:476px;font-size:10.45px;line-height:13px;color:#2e2e2e;transform:translateX(-50%);">8</div><div class="a" style="left:909px;top:468px;width:1px;height:26px;background:rgba(60,60,60,0.16)"></div><div class="a" style="left:910px;top:468px;width:1px;height:26px;background:rgba(60,60,60,0.44)"></div><div class="t" style="left:924.18px;top:476px;font-size:10.45px;line-height:13px;color:#2e2e2e;transform:translateX(-50%);">2</div><div class="a" style="left:937px;top:468px;width:1px;height:26px;background:rgba(60,60,60,0.58)"></div><div class="t" style="left:951.5px;top:476px;font-size:10.45px;line-height:13px;color:#2e2e2e;transform:translateX(-50%);">3</div><div class="a" style="left:964px;top:468px;width:1px;height:26px;background:rgba(60,60,60,0.39)"></div><div class="a" style="left:965px;top:468px;width:1px;height:26px;background:rgba(60,60,60,0.21)"></div><div class="t" style="left:978.8px;top:476px;font-size:10.45px;line-height:13px;color:#2e2e2e;transform:translateX(-50%);">2</div><div class="a" style="left:991px;top:468px;width:1px;height:26px;background:rgba(60,60,60,0.20)"></div><div class="a" style="left:992px;top:468px;width:1px;height:26px;background:rgba(60,60,60,0.40)"></div><div class="t" style="left:1006.12px;top:476px;font-size:10.45px;line-height:13px;color:#2e2e2e;transform:translateX(-50%);">3</div><div class="a" style="left:1019px;top:468px;width:1px;height:26px;background:rgba(60,60,60,0.58)"></div><div class="t" style="left:1033.42px;top:476px;font-size:10.45px;line-height:13px;color:#2e2e2e;transform:translateX(-50%);">4</div><div class="a" style="left:1046px;top:468px;width:1px;height:26px;background:rgba(60,60,60,0.43)"></div><div class="a" style="left:1047px;top:468px;width:1px;height:26px;background:rgba(60,60,60,0.17)"></div><div class="t" style="left:1060.73px;top:476px;font-size:10.45px;line-height:13px;color:#2e2e2e;transform:translateX(-50%);">9</div><div class="a" style="left:1073px;top:468px;width:1px;height:26px;background:rgba(60,60,60,0.25)"></div><div class="a" style="left:1074px;top:468px;width:1px;height:26px;background:rgba(60,60,60,0.35)"></div><div class="t" style="left:1088.05px;top:476px;font-size:10.45px;line-height:13px;color:#2e2e2e;transform:translateX(-50%);">3</div><div class="a" style="left:407px;top:508px;width:695px;height:1px;background:rgba(28,28,28,0.70)"></div><div class="a" style="left:407px;top:509px;width:695px;height:1px;background:rgba(28,28,28,0.80)"></div><div class="a" style="left:407px;top:599px;width:695px;height:1px;background:rgba(28,28,28,0.75)"></div><div class="a" style="left:407px;top:600px;width:695px;height:1px;background:rgba(28,28,28,0.75)"></div><div class="a" style="left:1100px;top:509px;width:1px;height:91px;background:rgba(28,28,28,0.40)"></div><div class="a" style="left:1101px;top:509px;width:1px;height:91px;background:#1c1c1c"></div><div class="a" style="left:406px;top:509px;width:1px;height:91px;background:rgba(28,28,28,0.30)"></div><div class="a" style="left:407px;top:509px;width:1px;height:91px;background:rgba(28,28,28,0.90)"></div><div class="a" style="left:433px;top:509px;width:1px;height:91px;background:rgba(28,28,28,0.20)"></div><div class="a" style="left:434px;top:509px;width:1px;height:91px;background:#1c1c1c"></div><div class="a" style="left:435px;top:509px;width:1px;height:91px;background:rgba(28,28,28,0.20)"></div><div class="t" style="left:420.5px;top:537px;font-size:10.45px;line-height:13px;color:#444;transform:translateX(-50%);">8</div><div class="t" style="left:436.7px;top:511px;font-size:10.45px;line-height:13px;color:#2e2e2e;">Особливі відмітки</div><div class="a" style="left:434px;top:522px;width:28px;height:1px;background:rgba(28,28,28,0.45)"></div><div class="a" style="left:434px;top:523px;width:28px;height:1px;background:#1c1c1c"></div><div class="a" style="left:434px;top:524px;width:28px;height:1px;background:rgba(28,28,28,0.05)"></div><div class="a" style="left:462px;top:522px;width:639px;height:1px;background:rgba(60,60,60,0.32)"></div><div class="a" style="left:462px;top:523px;width:639px;height:1px;background:rgba(60,60,60,0.48)"></div><div class="a" style="left:462.3px;top:523.3px;width:26.1px;height:76.7px;background:#ffffc4;"></div><div class="a" style="left:461px;top:523px;width:1px;height:77px;background:rgba(28,28,28,0.80)"></div><div class="a" style="left:462px;top:523px;width:1px;height:77px;background:rgba(28,28,28,0.60)"></div><div class="a" style="left:487px;top:523px;width:1px;height:77px;background:rgba(60,60,60,0.05)"></div><div class="a" style="left:488px;top:523px;width:1px;height:77px;background:rgba(60,60,60,0.45)"></div><div class="a" style="left:434px;top:549px;width:28px;height:1px;background:rgba(28,28,28,0.75)"></div><div class="a" style="left:434px;top:550px;width:28px;height:1px;background:rgba(28,28,28,0.75)"></div><div class="a" style="left:462px;top:549px;width:639px;height:1px;background:rgba(60,60,60,0.56)"></div><div class="a" style="left:462px;top:550px;width:639px;height:1px;background:rgba(60,60,60,0.24)"></div><div class="t" style="left:448.3px;top:531px;font-size:10.45px;line-height:13px;color:#2e2e2e;transform:translateX(-50%);">8.1</div><div class="t" style="left:448.3px;top:558px;font-size:10.45px;line-height:13px;color:#2e2e2e;transform:translateX(-50%);">8.2</div><div class="t" style="left:491.7px;top:525px;font-size:10.53px;line-height:13px;color:#2e2e2e;">платника податку, що подає цю податкову декларацію за останній податковий (звітний) період, на який припадає дата</div><div class="t" style="left:491.7px;top:537px;font-size:10.45px;line-height:13px;color:#2e2e2e;">державної реєстрації припинення²</div><div class="t" style="left:491.7px;top:552px;font-size:10.53px;line-height:13px;color:#2e2e2e;">платника податку, що подає цю податкову декларацію за останній податковий (звітний) період, в якому здійснено перехід</div></div><div class="a" style="left:1162px;top:109px;width:1px;height:453.500px;background:repeating-linear-gradient(180deg,#4a4a4a 0,#4a4a4a 2.200px,transparent 2.200px,transparent 3.450px)"></div><div class="a" style="left:1174.5px;top:126px;width:6.5px;height:419.5px;background:#dbdbdb;border-radius:3px"></div><div class="a" style="left:1174.5px;top:126px;width:6.5px;height:54.5px;background:#a6a6a6;border-radius:3px"></div><div class="a" style="left:1175.700px;top:116px;width:0;height:0;border-left:2px solid transparent;border-right:2px solid transparent;border-bottom:3px solid #c4c4c4"></div><div class="a" style="left:1175.500px;top:552.500px;width:0;height:0;border-left:2px solid transparent;border-right:2px solid transparent;border-top:3px solid #555"></div><div class="a" style="left:424px;top:565px;width:731.5px;height:6.5px;background:#dbdbdb;border-radius:3px"></div><div class="a" style="left:424px;top:565px;width:526px;height:6.5px;background:#a6a6a6;border-radius:3px"></div><div class="a" style="left:414px;top:566.500px;width:0;height:0;border-top:2px solid transparent;border-bottom:2px solid transparent;border-right:3px solid #c0c0c0"></div><div class="a" style="left:1163px;top:566.500px;width:0;height:0;border-top:2px solid transparent;border-bottom:2px solid transparent;border-left:3px solid #555"></div><div class="btn" style="left:406.5px;top:581px;width:104px;height:20.5px;"></div><svg class="a" style="left:412px;top:586px" width="12" height="12" viewBox="0 0 12 12"><circle cx="6" cy="6" r="5.400" fill="#3fb23f" stroke="#2d942d" stroke-width=".8"/><path d="M6 3v6M3 6h6" stroke="#fff" stroke-width="1.800"/></svg><div class="t" style="left:434px;top:588px;font-size:9.75px;line-height:12px;color:#484848;transform:scaleY(1.12);will-change:transform;">Додати рядок</div><div class="btn" style="left:519px;top:581px;width:103.5px;height:20.5px;"></div><svg class="a" style="left:524.500px;top:586px" width="12" height="12" viewBox="0 0 12 12"><circle cx="6" cy="6" r="5.400" fill="#f1e6e6" stroke="#bda8a8" stroke-width=".8"/><path d="M4 4l4 4M8 4l-4 4" stroke="#d22" stroke-width="1.200"/></svg><div class="t" style="left:543px;top:588px;font-size:9.75px;line-height:12px;color:#484848;transform:scaleY(1.12);will-change:transform;">Вилучити рядок</div><div class="t" style="left:211.5px;top:615px;font-size:9.75px;line-height:12px;color:#555;transform:scaleY(1.12);will-change:transform;">Коментар:</div><div class="a" style="left:275px;top:609px;width:321px;height:17.500px;border:1px solid #bdbdbd;border-radius:2px;background:#fff"></div></body></html>
